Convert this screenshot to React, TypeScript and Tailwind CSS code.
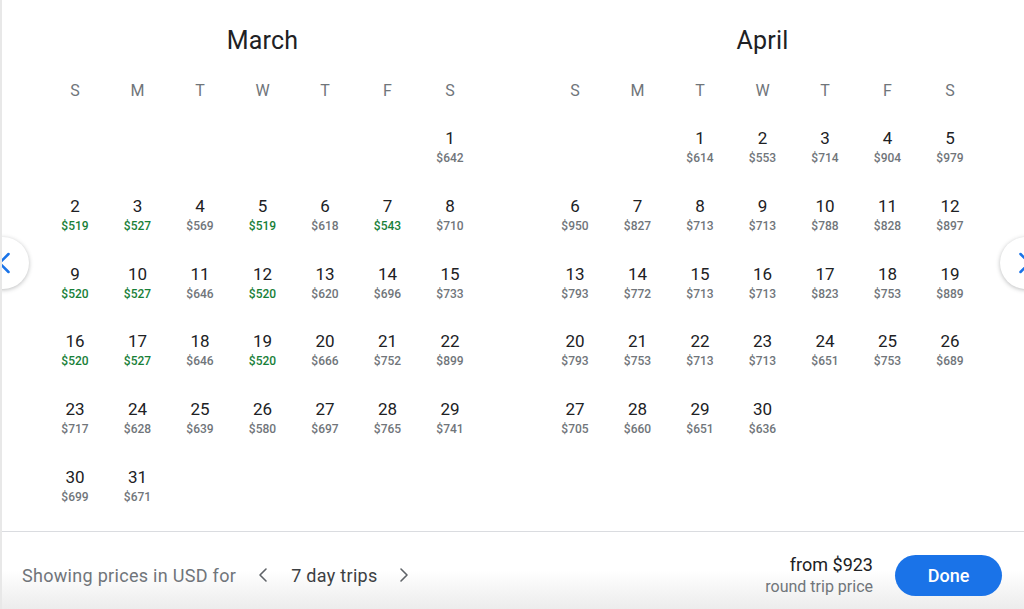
import { ChevronLeft, ChevronRight } from "lucide-react";

type Day = { d: number; p: number; low?: boolean };

const march: Day[] = [
    { d: 1, p: 642 },
    { d: 2, p: 519, low: true },
    { d: 3, p: 527, low: true },
    { d: 4, p: 569 },
    { d: 5, p: 519, low: true },
    { d: 6, p: 618 },
    { d: 7, p: 543, low: true },
    { d: 8, p: 710 },
    { d: 9, p: 520, low: true },
    { d: 10, p: 527, low: true },
    { d: 11, p: 646 },
    { d: 12, p: 520, low: true },
    { d: 13, p: 620 },
    { d: 14, p: 696 },
    { d: 15, p: 733 },
    { d: 16, p: 520, low: true },
    { d: 17, p: 527, low: true },
    { d: 18, p: 646 },
    { d: 19, p: 520, low: true },
    { d: 20, p: 666 },
    { d: 21, p: 752 },
    { d: 22, p: 899 },
    { d: 23, p: 717 },
    { d: 24, p: 628 },
    { d: 25, p: 639 },
    { d: 26, p: 580 },
    { d: 27, p: 697 },
    { d: 28, p: 765 },
    { d: 29, p: 741 },
    { d: 30, p: 699 },
    { d: 31, p: 671 },
];

const aprilPrices = [
    614, 553, 714, 904, 979, 950, 827, 713, 713, 788, 828, 897, 793, 772, 713, 713, 823, 753, 889, 793,
    753, 713, 713, 651, 753, 689, 705, 660, 651, 636,
];
const april: Day[] = aprilPrices.map((p, i) => ({ d: i + 1, p }));

const weekdays = ["S", "M", "T", "W", "T", "F", "S"];

function Month({ name, offset, days }: { name: string; offset: number; days: Day[] }) {
    const cells: (Day | null)[] = [...Array(offset).fill(null), ...days];
    return (
        <div className="w-[437.5px]">
            <h2 className="pt-[25px] text-center text-[25px] leading-[32px] tracking-[0.2px] text-[#202124]">{name}</h2>
            <div className="mt-[22px] grid grid-cols-7">
                {weekdays.map((w, i) => (
                    <div key={i} className="h-[24px] text-center text-[16px] leading-[24px] text-[#70757a]">
                        {w}
                    </div>
                ))}
            </div>
            <div className="mt-[10px] grid grid-cols-7 auto-rows-[67.8px]">
                {cells.map((c, i) =>
                    c ? (
                        <div key={i} className="flex flex-col items-center pt-[15px]">
                            <span className="text-[17px] leading-[20px] text-[#202124]">{c.d}</span>
                            <span
                                className={`mt-[2px] text-[12px] font-medium leading-[16px] ${c.low ? "text-[#188038]" : "text-[#70757a]"}`}
                            >
                                ${c.p}
                            </span>
                        </div>
                    ) : (
                        <div key={i} />
                    )
                )}
            </div>
        </div>
    );
}

export default function App() {
    return (
        <div className="relative h-[609px] w-[1024px] overflow-hidden border-l-2 border-[#e8e8e8] bg-white font-['Roboto',sans-serif]">
            <div className="flex h-[531px] gap-[62.5px] pl-[41.75px]">
                <Month name="March" offset={6} days={march} />
                <Month name="April" offset={2} days={april} />
            </div>

            {/* month nav */}
            <button className="absolute left-[-25px] top-[237px] flex h-[52px] w-[52px] items-center justify-center rounded-full bg-white shadow-[0_1px_4px_rgba(60,64,67,0.35)]">
                <ChevronLeft size={36} strokeWidth={1.7} className="ml-[1px] text-[#1a73e8]" />
            </button>
            <button className="absolute left-[998px] top-[237px] flex h-[52px] w-[52px] items-center justify-center rounded-full bg-white shadow-[0_1px_4px_rgba(60,64,67,0.35)]">
                <ChevronRight size={36} strokeWidth={1.7} className="mr-[2px] text-[#1a73e8]" />
            </button>

            <div className="flex h-[78px] items-center justify-between border-t border-[#dadce0] bg-gradient-to-b from-white via-white to-[#ececec] pl-[20px] pr-[22px] pt-[9px]">
                <div className="flex items-center text-[18px] tracking-[0.3px]">
                    <span className="text-[#70757a]">Showing prices in USD for</span>
                    <ChevronLeft size={24} strokeWidth={1.6} className="ml-[15px] text-[#5f6368]" />
                    <span className="ml-[16px] text-[#3c4043]">7 day trips</span>
                    <ChevronRight size={24} strokeWidth={1.6} className="ml-[14px] text-[#5f6368]" />
                </div>
                <div className="flex items-center">
                    <div className="flex flex-col items-end">
                        <span className="text-[18px] leading-[23px] text-[#202124]">from $923</span>
                        <span className="text-[16px] leading-[22px] text-[#70757a]">round trip price</span>
                    </div>
                    <button className="ml-[22px] h-[41px] w-[107px] rounded-full bg-[#1a73e8] text-[18px] font-medium text-white">
                        Done
                    </button>
                </div>
            </div>
        </div>
    );
}
